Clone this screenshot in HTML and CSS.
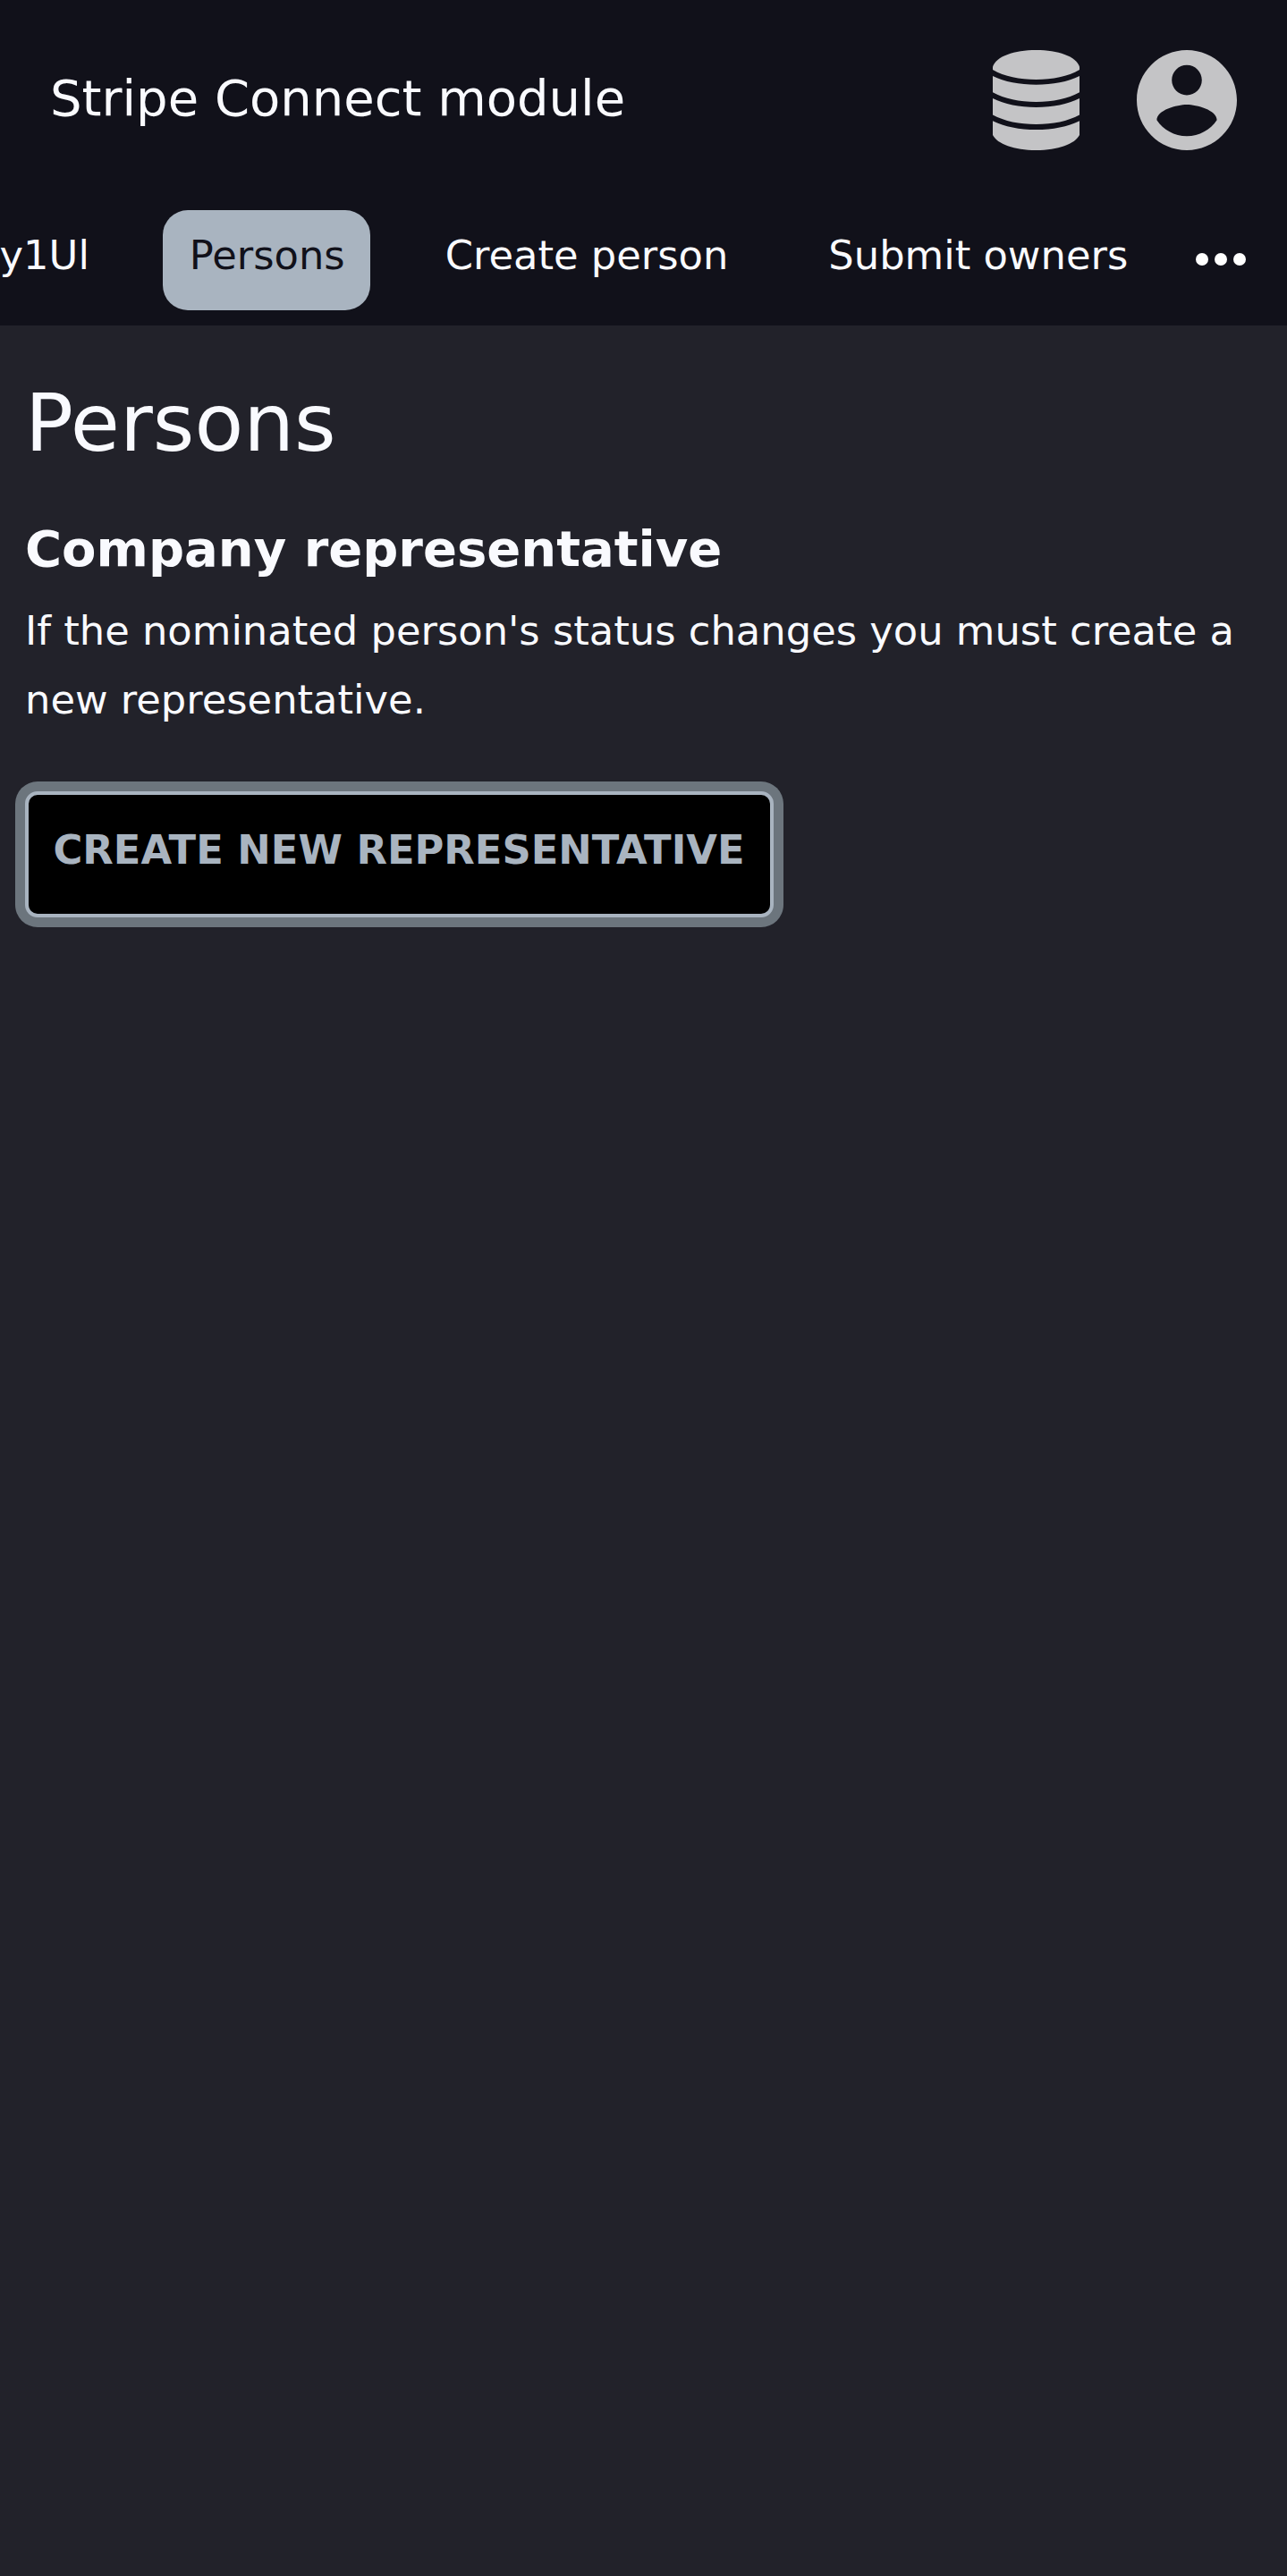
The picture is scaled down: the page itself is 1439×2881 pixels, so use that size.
FILE: index.html
```html
<!DOCTYPE html>
<html lang="en">
<head>
<meta charset="utf-8">
<title>Stripe Connect module</title>
<link rel="stylesheet" href="styles.css">
</head>
<body>
<header class="header">
  <div class="topbar">
    <div class="title">Stripe Connect module</div>
    <div class="menus">
      <svg class="icon-db" viewBox="0 0 97 112">
        <path d="M0 18.500C4 7 24 0 48.500 0S93 7 97 18.500V22C84 29.500 67 33 48.500 33S13 29.500 0 22Z"/>
        <path d="M0 29C13 35.500 30 38.700 48.500 38.700S84 35.500 97 29V47.300C84 54.500 67 58 48.500 58S13 54.500 0 47.300Z"/>
        <path d="M0 54C13 60.500 30 63.900 48.500 63.900S84 60.500 97 54V72.500C84 79.500 67 83 48.500 83S13 79.500 0 72.500Z"/>
        <path d="M0 79.200C13 85.700 30 89 48.500 89S84 85.700 97 79.200V95C92 105 73 112 48.500 112S5 105 0 95Z"/>
      </svg>
      <svg class="icon-user" viewBox="2 2 20 20">
        <path d="M12 2C6.480 2 2 6.480 2 12s4.480 10 10 10 10-4.480 10-10S17.520 2 12 2zm0 3c1.660 0 3 1.340 3 3s-1.340 3-3 3-3-1.340-3-3 1.340-3 3-3zm0 14.200c-2.500 0-4.710-1.280-6-3.220.03-1.990 4-3.080 6-3.080 1.990 0 5.970 1.090 6 3.080-1.290 1.940-3.500 3.220-6 3.220z"/>
      </svg>
    </div>
  </div>
  <nav class="nav">
    <div class="tabs">
      <a class="tab">y1Ul</a>
      <a class="tab active">Persons</a>
      <a class="tab">Create person</a>
      <a class="tab">Submit owners</a>
    </div>
    <svg class="more" viewBox="0 0 56 14"><circle cx="7" cy="7" r="7"/><circle cx="28" cy="7" r="7"/><circle cx="49" cy="7" r="7"/></svg>
  </nav>
</header>
<main class="content">
  <h1>Persons</h1>
  <h2>Company representative</h2>
  <p>If the nominated person's status changes you must create a new representative.</p>
  <button class="button" type="button">CREATE NEW REPRESENTATIVE</button>
</main>
</body>
</html>
```
FILE: styles.css
```css
* { box-sizing: border-box; }
body {
  margin: 0;
  min-height: 2881px;
  background: #22222a;
  color: #f9fafe;
  font: 44.8px/76.16px "DejaVu Sans", sans-serif;
  overflow-x: hidden;
}
.header { height: 364px; background: #11111a; }
.topbar {
  display: flex;
  align-items: center;
  justify-content: space-between;
  height: 224px;
  padding: 0 56px;
}
.title { font-size: 56px; padding-bottom: 3px; }
.menus { display: flex; gap: 64px; fill: #c4c4c6; }
.icon-db { width: 97px; height: 112px; }
.icon-user { width: 112px; height: 112px; }
.nav {
  display: flex;
  align-items: flex-start;
  justify-content: space-between;
  height: 140px;
  padding: 10.5px 46px 0 0;
  overflow: hidden;
}
.tabs { display: flex; gap: 54.4px; margin-left: -30px; }
.tab {
  height: 112px;
  padding: 13.6px 28px 0 29.6px;
  border-radius: 28px;
  white-space: nowrap;
}
.active { background: #a9b4c0; color: #11111a; }
.more { width: 56px; height: 14px; margin-top: 48.7px; fill: #fff; }
.content { padding: 55px 28px 0; }
h1 { margin: 0; font-size: 89.6px; font-weight: 400; line-height: 108px; }
h2 { margin: 39px 0 0; font-size: 56px; line-height: 96px; }
p { margin: 6.4px 0 0; }
.button {
  display: block;
  width: 837px;
  height: 141px;
  margin: 64.5px 0 0;
  padding: 0 1px 10px 0;
  border: 4px solid #a9b4c0;
  border-radius: 14px;
  background: #000;
  color: #a9b4c0;
  box-shadow: 0 0 0 11px #6c757d;
  font: bold 44.8px "DejaVu Sans", sans-serif;
}
```
